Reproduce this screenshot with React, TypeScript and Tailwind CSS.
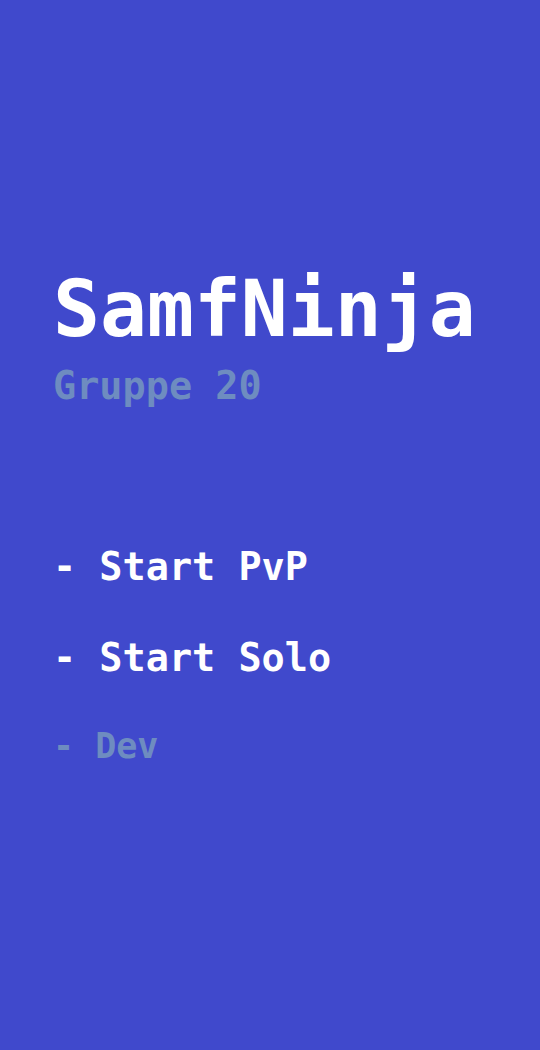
export default function App() {
  const mono = { fontFamily: '"DejaVu Sans Mono", "Liberation Mono", monospace' };
  return (
    <div className="min-h-screen w-full bg-[#4049cc] pl-[53px] pt-[270px] font-bold" style={mono}>
      <div className="flex flex-col items-start">
        <h1 className="text-[78px] leading-none text-white">SamfNinja</h1>
        <div className="mt-[19px] text-[38.5px] leading-none text-[#6e8cc0]">Gruppe 20</div>
        <div className="mt-[142px] text-[38.5px] leading-none text-white">- Start PvP</div>
        <div className="mt-[53px] text-[38.5px] leading-none text-white">- Start Solo</div>
        <div className="mt-[51px] text-[35px] leading-none text-[#6e8cc0]">- Dev</div>
      </div>
    </div>
  );
}
